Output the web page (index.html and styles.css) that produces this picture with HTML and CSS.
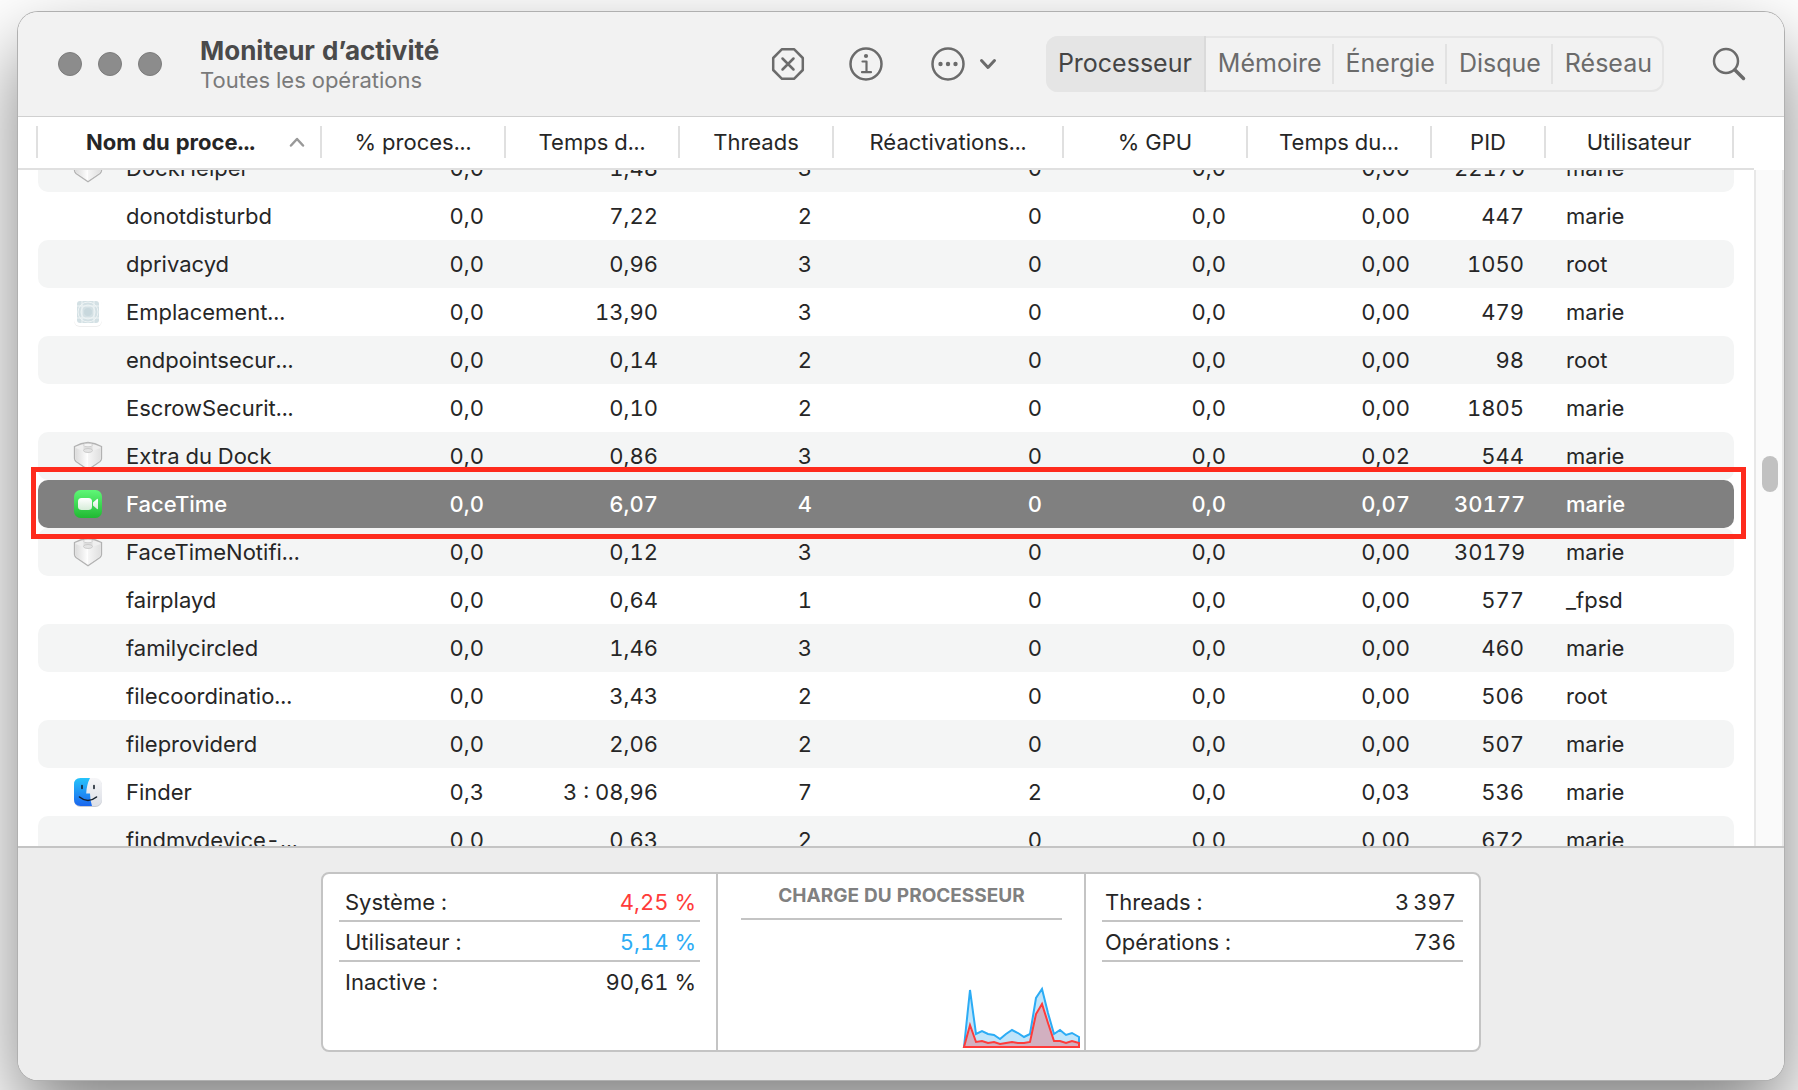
FILE: index.html
```html
<!DOCTYPE html>
<html lang="fr">
<head>
<meta charset="utf-8">
<meta name="viewport" content="width=device-width, initial-scale=1">
<title>Moniteur d’activité</title>
<link rel="stylesheet" href="styles.css">
</head>
<body>
<svg class="defs" width="0" height="0" aria-hidden="true">
  <defs>
    <linearGradient id="ft" x1="0" y1="0" x2="0" y2="1"><stop offset="0" stop-color="#5ff777"/><stop offset="1" stop-color="#20b932"/></linearGradient>
    <linearGradient id="cam" x1="0" y1="0" x2="0" y2="1"><stop offset="0" stop-color="#fff"/><stop offset="1" stop-color="#d5ecd8"/></linearGradient>
    <linearGradient id="fb" x1="0" y1="0" x2="0" y2="1"><stop offset="0" stop-color="#25c4fb"/><stop offset="1" stop-color="#1b66ee"/></linearGradient>
    <linearGradient id="fw" x1="0" y1="0" x2="0" y2="1"><stop offset="0" stop-color="#f6f6f8"/><stop offset="1" stop-color="#dcdfe6"/></linearGradient>
    <linearGradient id="bl" x1="0" y1="0" x2="1" y2="0"><stop offset="0" stop-color="#dcdcdc"/><stop offset="1" stop-color="#fff"/></linearGradient>
    <linearGradient id="br" x1="0" y1="0" x2="1" y2="0"><stop offset="0" stop-color="#f6f6f6"/><stop offset="1" stop-color="#e0e0e0"/></linearGradient>
    <symbol id="brick" viewBox="0 0 30 30">
      <path d="M1.500 5.500Q8 2 15 1.500 22 2 28.500 5.500V17.500Q28.500 19 27 20.500L15 28.800 3 20.500Q1.500 19 1.500 17.500Z" fill="#efefef" stroke="#b2b2b2" stroke-width="1.300"/>
      <path d="M2.500 7 15 11.500V27.500L4 20Q2.500 19 2.500 17.500Z" fill="url(#bl)"/>
      <path d="M27.500 7 15 11.500V27.500L26 20Q27.500 19 27.500 17.500Z" fill="url(#br)"/>
      <path d="M10.500 4V9.500Q15 12.500 19.500 9.500V4Z" fill="#dedede"/>
      <ellipse cx="15" cy="4" rx="4.500" ry="1.800" fill="#f4f4f4" stroke="#c6c6c6" stroke-width=".8"/>
      <ellipse cx="15" cy="9.500" rx="4.500" ry="2" fill="#e4e4e4" stroke="#c4c4c4" stroke-width=".8"/>
    </symbol>
  </defs>
</svg>
<main class="window">
  <header class="toolbar">
    <div class="lights"><i></i><i></i><i></i></div>
    <div class="titles"><h1>Moniteur d’activité</h1><p>Toutes les opérations</p></div>
    <div class="actions">
      <button type="button" aria-label="Arrêter"><svg width="34" height="34" viewBox="0 0 34 34"><path d="M11 2.200H23L31.800 11V23L23 31.800H11L2.200 23V11Z"/><path d="M11.500 11.500 22.500 22.500M22.500 11.500 11.500 22.500"/></svg></button>
      <button type="button" aria-label="Informations"><svg width="34" height="34" viewBox="0 0 34 34"><circle cx="17" cy="17" r="15.500"/><path d="M13.500 14.500H17.500V25M13 25.200H22" stroke-width="2.200"/><circle class="dot" cx="17" cy="9" r="2.100"/></svg></button>
      <button type="button" class="more" aria-label="Plus d’options"><svg width="34" height="34" viewBox="0 0 34 34"><circle cx="17" cy="17" r="15.500"/><circle class="dot" cx="9.500" cy="17" r="2.200"/><circle class="dot" cx="17" cy="17" r="2.200"/><circle class="dot" cx="24.500" cy="17" r="2.200"/></svg><svg width="18" height="12" viewBox="0 0 18 12"><path d="M2.500 2.500 9 9.500 15.500 2.500" stroke-width="3"/></svg></button>
    </div>
    <nav class="tabs">
      <button type="button" class="on">Processeur</button><button type="button">Mémoire</button><button type="button">Énergie</button><button type="button">Disque</button><button type="button">Réseau</button>
    </nav>
    <button type="button" class="search" aria-label="Rechercher"><svg width="34" height="34" viewBox="0 0 34 34"><circle cx="14" cy="14" r="12"/><path d="M23 23 31.500 31.500" stroke-width="3.500"/></svg></button>
  </header>
  <div class="head">
    <table>
      <colgroup><col><col class="w184"><col class="w174"><col class="w154"><col class="w230"><col class="w184"><col class="w184"><col class="w114"><col class="w188"></colgroup>
      <thead><tr>
        <th scope="col" class="sorted"><span>Nom du proce...</span><svg width="16" height="10" viewBox="0 0 16 10"><path d="M2 8.500 8 2 14 8.500" fill="none" stroke="#999" stroke-width="2.500" stroke-linecap="round" stroke-linejoin="round"/></svg></th>
        <th scope="col">% proces...</th><th scope="col">Temps d...</th><th scope="col">Threads</th><th scope="col">Réactivations...</th><th scope="col">% GPU</th><th scope="col">Temps du...</th><th scope="col">PID</th><th scope="col">Utilisateur</th>
      </tr></thead>
    </table>
  </div>
  <section class="list">
    <div class="rows">
    <table>
      <colgroup><col><col class="w184"><col class="w174"><col class="w154"><col class="w230"><col class="w184"><col class="w184"><col class="w114"><col class="w188"></colgroup>
      <tbody>
      <tr><td><svg class="ico" aria-hidden="true"><use href="#brick"/></svg>DockHelper</td><td>0,0</td><td>1,48</td><td>3</td><td>0</td><td>0,0</td><td>0,00</td><td>22170</td><td>marie</td></tr>
      <tr><td>donotdisturbd</td><td>0,0</td><td>7,22</td><td>2</td><td>0</td><td>0,0</td><td>0,00</td><td>447</td><td>marie</td></tr>
      <tr><td>dprivacyd</td><td>0,0</td><td>0,96</td><td>3</td><td>0</td><td>0,0</td><td>0,00</td><td>1050</td><td>root</td></tr>
      <tr><td><svg class="ico" viewBox="0 0 30 30" aria-hidden="true"><rect x="1" y="2" width="28" height="28" rx="6" fill="#eee"/><rect x="1" y="1" width="28" height="28" rx="6" fill="#fff"/><rect x="4" y="4" width="22" height="22" rx="3" fill="#d3e0e4"/><g fill="none" stroke="#eef4f5" stroke-width="1"><circle cx="15" cy="15" r="10"/><circle cx="15" cy="15" r="7"/><path d="M4 9H26M4 21H26M9 4V26M21 4V26"/></g><circle cx="15" cy="15" r="4" fill="#c8d8dd"/></svg>Emplacement...</td><td>0,0</td><td>13,90</td><td>3</td><td>0</td><td>0,0</td><td>0,00</td><td>479</td><td>marie</td></tr>
      <tr><td>endpointsecur...</td><td>0,0</td><td>0,14</td><td>2</td><td>0</td><td>0,0</td><td>0,00</td><td>98</td><td>root</td></tr>
      <tr><td>EscrowSecurit...</td><td>0,0</td><td>0,10</td><td>2</td><td>0</td><td>0,0</td><td>0,00</td><td>1805</td><td>marie</td></tr>
      <tr><td><svg class="ico" aria-hidden="true"><use href="#brick"/></svg>Extra du Dock</td><td>0,0</td><td>0,86</td><td>3</td><td>0</td><td>0,0</td><td>0,02</td><td>544</td><td>marie</td></tr>
      <tr class="selected"><td><svg class="ico" viewBox="0 0 30 30" aria-hidden="true"><rect x="1" y="1" width="28" height="28" rx="6.500" fill="url(#ft)"/><rect x="5" y="9" width="14" height="12" rx="3.500" fill="url(#cam)"/><path d="M20 13.500 24 10Q25 9.500 25 10.500V19.500Q25 20.500 24 20L20 16.500Z" fill="url(#cam)"/></svg>FaceTime<span class="callout"></span></td><td>0,0</td><td>6,07</td><td>4</td><td>0</td><td>0,0</td><td>0,07</td><td>30177</td><td>marie</td></tr>
      <tr><td><svg class="ico" aria-hidden="true"><use href="#brick"/></svg>FaceTimeNotifi...</td><td>0,0</td><td>0,12</td><td>3</td><td>0</td><td>0,0</td><td>0,00</td><td>30179</td><td>marie</td></tr>
      <tr><td>fairplayd</td><td>0,0</td><td>0,64</td><td>1</td><td>0</td><td>0,0</td><td>0,00</td><td>577</td><td>_fpsd</td></tr>
      <tr><td>familycircled</td><td>0,0</td><td>1,46</td><td>3</td><td>0</td><td>0,0</td><td>0,00</td><td>460</td><td>marie</td></tr>
      <tr><td>filecoordinatio...</td><td>0,0</td><td>3,43</td><td>2</td><td>0</td><td>0,0</td><td>0,00</td><td>506</td><td>root</td></tr>
      <tr><td>fileproviderd</td><td>0,0</td><td>2,06</td><td>2</td><td>0</td><td>0,0</td><td>0,00</td><td>507</td><td>marie</td></tr>
      <tr><td><svg class="ico" viewBox="0 0 30 30" aria-hidden="true"><rect x="1" y="2" width="28" height="28" rx="6.500" fill="#c9ccd2"/><rect x="1" y="1" width="28" height="28" rx="6.500" fill="url(#fw)"/><path d="M7.500 1H17Q13.500 8 13.200 16.500H17Q17 23 19 29H7.500Q1 29 1 22.500V7.500Q1 1 7.500 1Z" fill="url(#fb)"/><path d="M9 8.500V11.500M21 8.500V11.500M6.500 20Q15 27 23.500 20" fill="none" stroke="#16202c" stroke-width="1.600" stroke-linecap="round"/></svg>Finder</td><td>0,3</td><td>3 : 08,96</td><td>7</td><td>2</td><td>0,0</td><td>0,03</td><td>536</td><td>marie</td></tr>
      <tr><td>findmydevice-...</td><td>0,0</td><td>0,63</td><td>2</td><td>0</td><td>0,0</td><td>0,00</td><td>672</td><td>marie</td></tr>
      </tbody>
    </table>
    </div>
    <div class="gutter"><div class="thumb"></div></div>
  </section>
  <footer class="summary">
    <div class="panel">
      <dl class="stats">
        <div><dt>Système :</dt><dd class="red">4,25 %</dd></div>
        <div><dt>Utilisateur :</dt><dd class="blue">5,14 %</dd></div>
        <div><dt>Inactive :</dt><dd>90,61 %</dd></div>
      </dl>
      <div class="chart">
        <h2>CHARGE DU PROCESSEUR</h2>
        <svg width="118" height="64" viewBox="0 0 118 64" role="img" aria-label="Charge du processeur">
          <path d="M2 62 8 5 14 49 20 46 26 49 32 50 38 54 44 49 50 45 56 48 62 52 68 49 74 13 80 4 86 28 92 49 98 45 104 50 110 48 117 52V62Z" fill="#bfe4fa" stroke="#2cacf5" stroke-width="2"/>
          <path d="M2 62 8 40 14 57 20 56 26 58 32 57 38 59 44 58 50 57 56 58 62 58 68 57 74 29 80 19 86 38 92 56 98 56 104 58 110 56 117 58V62Z" fill="#d2b0c0" stroke="#ff3b3a" stroke-width="2"/>
        </svg>
      </div>
      <dl class="stats counts">
        <div><dt>Threads :</dt><dd>3&#8201;397</dd></div>
        <div><dt>Opérations :</dt><dd>736</dd></div>
      </dl>
    </div>
  </footer>
</main>
</body>
</html>
```
FILE: styles.css
```css
* { box-sizing: border-box; margin: 0; }
body {
  height: 100vh;
  padding: 12px 14px 10px 18px;
  overflow: hidden;
  background: #fff;
  color: #262626;
  font: 22px/28px Inter, "Liberation Sans", sans-serif;
  font-variant-numeric: tabular-nums;
}
.defs { position: absolute; }
button { padding: 0; border: 0; background: none; color: inherit; font: inherit; }
svg { display: block; }

.window {
  display: flex;
  flex-direction: column;
  height: 100%;
  border-radius: 20px;
  background: #fff;
  box-shadow: 0 0 0 1px #b0b0b0, 0 36px 80px rgba(0, 0, 0, .5);
  overflow: hidden;
}

.toolbar {
  display: flex;
  align-items: center;
  flex: none;
  height: 105px;
  padding: 0 38px 0 40px;
  border-bottom: 1px solid #d0d0d0;
  background: #f2f2f2;
}
.lights { display: flex; gap: 16px; }
.lights i { width: 24px; height: 24px; border: 1px solid #7c7c7c; border-radius: 50%; background: #8c8c8c; }
.titles { margin-left: 38px; }
.titles h1 { color: #4a4a4a; font-size: 26px; line-height: 32px; font-weight: 700; }
.titles p { color: #7a7a7a; line-height: 26px; }
.actions { display: flex; gap: 44px; margin-left: auto; margin-right: 49px; }
.actions svg, .search svg { fill: none; stroke: #6b6b6b; stroke-width: 2.5; stroke-linecap: round; stroke-linejoin: round; }
.actions .dot { fill: #6b6b6b; stroke: none; }
.more { display: flex; align-items: center; gap: 14px; margin-left: 4px; }
.tabs {
  display: flex;
  height: 56px;
  border-radius: 12px;
  box-shadow: inset 0 0 0 2px #e6e6e6;
  color: #6b6b6b;
  font-size: 25px;
}
.tabs button { display: flex; align-items: center; justify-content: center; padding: 0 12px 2px; }
.tabs button + button { background: linear-gradient(#e2e2e2, #e2e2e2) right center / 2px 40px no-repeat; }
.tabs button:last-child { background: none; }
.tabs .on { border-right: 2px solid #dadada; border-radius: 12px 0 0 12px; background: #e5e5e5; color: #444; }
.search { margin-left: 48px; }

table { width: 100%; border-collapse: separate; border-spacing: 0; table-layout: fixed; }
.w114 { width: 114px; }
.w154 { width: 154px; }
.w174 { width: 174px; }
.w184 { width: 184px; }
.w188 { width: 188px; }
.w230 { width: 230px; }

.head { flex: none; height: 53px; margin-right: 30px; padding: 9px 20px 0 18px; border-bottom: 2px solid #e0e0e0; }
.head table { border-left: 2px solid #e0e0e0; }
.head th { height: 32px; padding: 0; border-right: 2px solid #e0e0e0; font-weight: 400; white-space: nowrap; }
.head .sorted { display: flex; align-items: center; padding: 0 15px 0 48px; font-weight: 700; }
.sorted svg { margin-left: auto; }

.list { display: flex; flex: 1; min-height: 0; }
.rows { flex: 1; padding: 0 20px; overflow: hidden; }
.rows table { margin-top: -26px; }
.rows td { height: 48px; padding: 0 22px; text-align: right; white-space: nowrap; }
.rows td:first-child { padding: 0 0 0 88px; border-radius: 10px 0 0 10px; text-align: left; }
.rows td:last-child { padding: 0 0 0 20px; border-radius: 0 10px 10px 0; text-align: left; }
.rows tr:nth-child(odd) td { background: #f4f5f5; }
.rows .selected { position: relative; color: #fff; font-weight: 500; }
.rows .selected td { background: #808080; }
.ico { float: left; width: 30px; height: 30px; margin: -1px 0 -1px -53px; }
.callout { position: absolute; inset: -13px -12px -11px -7px; border: 5px solid #fe2b1d; z-index: 1; }
.gutter { position: relative; flex: none; width: 30px; border-left: 2px solid #e8e8e8; border-right: 2px solid #e8e8e8; background: #fafafa; }
.thumb { position: absolute; top: calc(42% + 2px); left: 6px; width: 16px; height: 36px; border-radius: 8px; background: #c1c1c1; }

.summary { flex: none; padding: 24px 20px 28px; border-top: 2px solid #c4c4c4; background: #ededed; }
.panel {
  display: grid;
  grid-template-columns: 393fr 370fr 393fr;
  max-width: 1160px;
  height: 180px;
  margin: 0 auto;
  border: 2px solid #c4c4c4;
  border-radius: 8px;
  background: #fff;
}
.stats { padding: 8px 16px; }
.stats div { display: flex; justify-content: space-between; height: 40px; padding: 6px 4px 0 6px; border-bottom: 2px solid #c4c4c4; }
.stats div:nth-child(3) { border: 0; }
.stats dd { margin: 0; }
.counts div { padding: 6px 7px 0 3px; }
.red { color: #ff3b3a; }
.blue { color: #2cacf5; }
.chart { display: flex; flex-direction: column; padding: 0 4px 1px 23px; border: solid #c4c4c4; border-width: 0 2px; }
.chart h2 { height: 46px; margin-right: 18px; padding-top: 8px; border-bottom: 2px solid #c4c4c4; color: #808080; font-size: 19px; font-weight: 700; text-align: center; white-space: nowrap; }
.chart svg { margin: auto 0 0 auto; }
```
